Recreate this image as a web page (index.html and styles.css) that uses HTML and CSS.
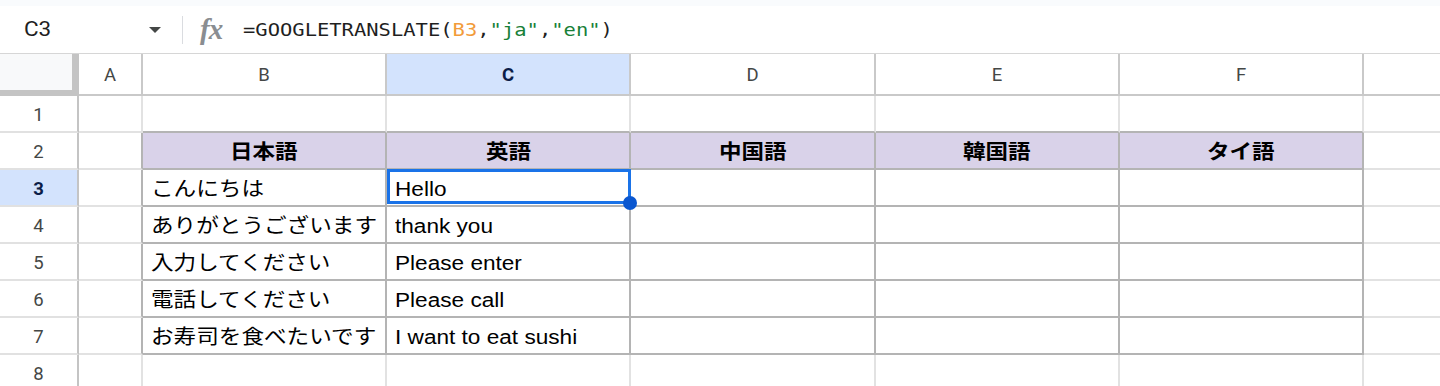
FILE: index.html
```html
<!DOCTYPE html>
<html lang="ja">
<head>
<meta charset="utf-8">
<title>Sheet</title>
<link rel="stylesheet" href="styles.css">
</head>
<body>
<div class="top-strip"></div>
<div class="fbar">
  <div class="namebox">
    <span class="nb-text">C3</span>
    <svg class="nb-caret" width="12" height="6" viewBox="0 0 12 6"><path d="M0 0h12L6 6z" fill="#444746"/></svg>
  </div>
  <div class="sep"></div>
  <span class="fx">fx</span>
  <div class="formula">=GOOGLETRANSLATE(<span class="ref">B3</span>,<span class="str">"ja"</span>,<span class="str">"en"</span>)</div>
</div>
<div class="grid">
  <div class="corner"></div>
  <div class="ch">A</div>
  <div class="ch">B</div>
  <div class="ch ch-sel">C</div>
  <div class="ch">D</div>
  <div class="ch">E</div>
  <div class="ch">F</div>
  <div class="ch ch-last"></div>

  <div class="rh">1</div>
  <div class="c"></div>
  <div class="c tt"></div>
  <div class="c tt"></div>
  <div class="c tt"></div>
  <div class="c tt"></div>
  <div class="c tt"></div>
  <div class="c last"></div>

  <div class="rh">2</div>
  <div class="c tl"></div>
  <div class="c t hd"><span class="tx">日本語</span></div>
  <div class="c t hd"><span class="tx">英語</span></div>
  <div class="c t hd"><span class="tx">中国語</span></div>
  <div class="c t hd"><span class="tx">韓国語</span></div>
  <div class="c t hd"><span class="tx">タイ語</span></div>
  <div class="c last"></div>

  <div class="rh rh-sel">3</div>
  <div class="c tl"></div>
  <div class="c t"><span class="tx">こんにちは</span></div>
  <div class="c t sel"><span class="tx">Hello</span><div class="sel-box"><span class="handle"></span></div></div>
  <div class="c t"></div>
  <div class="c t"></div>
  <div class="c t"></div>
  <div class="c last"></div>

  <div class="rh">4</div>
  <div class="c tl"></div>
  <div class="c t"><span class="tx">ありがとうございます</span></div>
  <div class="c t"><span class="tx">thank you</span></div>
  <div class="c t"></div>
  <div class="c t"></div>
  <div class="c t"></div>
  <div class="c last"></div>

  <div class="rh">5</div>
  <div class="c tl"></div>
  <div class="c t"><span class="tx">入力してください</span></div>
  <div class="c t"><span class="tx">Please enter</span></div>
  <div class="c t"></div>
  <div class="c t"></div>
  <div class="c t"></div>
  <div class="c last"></div>

  <div class="rh">6</div>
  <div class="c tl"></div>
  <div class="c t"><span class="tx">電話してください</span></div>
  <div class="c t"><span class="tx">Please call</span></div>
  <div class="c t"></div>
  <div class="c t"></div>
  <div class="c t"></div>
  <div class="c last"></div>

  <div class="rh">7</div>
  <div class="c tl"></div>
  <div class="c t"><span class="tx">お寿司を食べたいです</span></div>
  <div class="c t"><span class="tx">I want to eat sushi</span></div>
  <div class="c t"></div>
  <div class="c t"></div>
  <div class="c t"></div>
  <div class="c last"></div>

  <div class="rh">8</div>
  <div class="c"></div>
  <div class="c"></div>
  <div class="c"></div>
  <div class="c"></div>
  <div class="c"></div>
  <div class="c"></div>
  <div class="c last"></div>
</div>
</body>
</html>
```

FILE: styles.css
```css
* {
  box-sizing: border-box;
  margin: 0;
  padding: 0;
}

html,
body {
  width: 1440px;
  height: 386px;
  overflow: hidden;
  background: #ffffff;
}

body {
  font-family: Roboto, "Noto Sans CJK JP", sans-serif;
  color: #1f1f1f;
}

.top-strip {
  height: 6px;
  background: #f9fbfd;
}

.fbar {
  height: 48px;
  display: flex;
  align-items: center;
  border-bottom: 1px solid #d6d6d6;
}

.namebox {
  width: 182px;
  height: 100%;
  display: flex;
  align-items: center;
  justify-content: space-between;
  padding-left: 24px;
  padding-right: 21px;
}

.nb-text {
  display: inline-block;
  font-size: 19.5px;
  color: #1f1f1f;
  transform: scaleX(1.15);
  transform-origin: left center;
}

.nb-caret {
  display: block;
}

.sep {
  width: 1px;
  height: 28px;
  background: #dadce0;
}

.fx {
  margin-left: 17px;
  width: 27px;
  font-family: "Liberation Serif", serif;
  font-style: italic;
  font-weight: 700;
  font-size: 29px;
  color: #8a8d91;
  line-height: 1;
  letter-spacing: -1px;
}

.formula {
  margin-left: 16px;
  font-family: "DejaVu Sans Mono", monospace;
  font-size: 17.5px;
  color: #1f1f1f;
  white-space: nowrap;
  transform: scaleX(1.17);
  transform-origin: left center;
}

.formula .ref {
  color: #f29b3a;
}

.formula .str {
  color: #188038;
}

.grid {
  display: grid;
  grid-template-columns: 79px 64px 244px 244px 245px 244px 244px 1fr;
  grid-template-rows: 42px repeat(8, 37px);
}

.corner {
  background: #f8f9fa;
  border-right: 7px solid #c4c4c4;
  border-bottom: 6px solid #c4c4c4;
}

.ch {
  display: flex;
  align-items: center;
  justify-content: center;
  font-size: 18.5px;
  color: #444746;
  border-right: 2px solid #c9c9c9;
  border-bottom: 2px solid #c9c9c9;
  padding-top: 2px;
}

.ch-sel {
  background: #d3e3fd;
  color: #0b1d48;
  font-weight: 700;
}

.ch-last {
  border-right: none;
}

.rh {
  display: flex;
  align-items: center;
  justify-content: center;
  font-size: 18.5px;
  color: #444746;
  border-right: 2px solid #c4c4c4;
  border-bottom: 2px solid #e1e1e1;
  padding-top: 3px;
}

.rh-sel {
  background: #d3e3fd;
  color: #0b1d48;
  font-weight: 700;
}

.c {
  display: flex;
  align-items: flex-end;
  padding: 0 8px 3px 8px;
  border-right: 2px solid #e2e2e2;
  border-bottom: 2px solid #e2e2e2;
  font-family: "Liberation Sans", "Noto Sans CJK JP", sans-serif;
  font-size: 20px;
  line-height: 26px;
  color: #000000;
  white-space: nowrap;
}

.c.last {
  border-right: none;
}

.tx {
  display: inline-block;
  transform: scaleX(1.13);
  transform-origin: left bottom;
}

.c.t {
  border-right-color: #b4b4b4;
  border-bottom-color: #b4b4b4;
}

.c.tl {
  border-right-color: #b4b4b4;
}

.c.tt {
  border-bottom-color: #b4b4b4;
}

.c.hd {
  background: #d9d2e9;
  justify-content: center;
  align-items: center;
  padding: 2px 0 0 0;
  font-weight: 700;
  font-size: 20.5px;
}

.c.hd .tx {
  transform: scaleX(1.1);
  transform-origin: center;
}

.sel {
  position: relative;
}

.sel-box {
  position: absolute;
  top: -1px;
  left: 0;
  right: -2px;
  bottom: 1px;
  border: 3px solid #1a73e8;
}

.handle {
  position: absolute;
  right: -9px;
  bottom: -9px;
  width: 14px;
  height: 14px;
  border-radius: 50%;
  background: #0b57d0;
}
```
